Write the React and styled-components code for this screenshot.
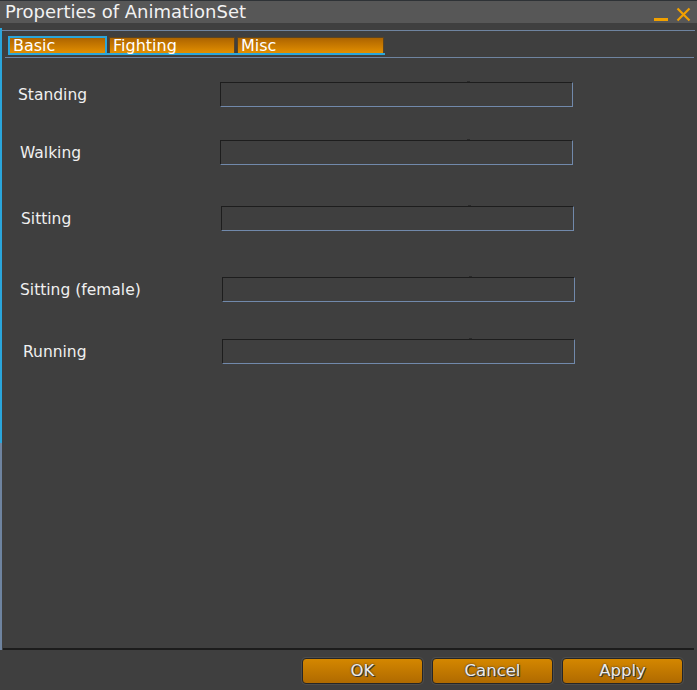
import React from "react";
import styled, { createGlobalStyle } from "styled-components";

const Global = createGlobalStyle`
  html, body { margin: 0; padding: 0; background: #3f3f3f; }
  body { font-family: "DejaVu Sans", "Liberation Sans", sans-serif; }
`;

const Window = styled.div`
  width: 697px;
  height: 690px;
  display: flex;
  flex-direction: column;
  background: #3f3f3f;
  overflow: hidden;
`;

const TitleBar = styled.div`
  height: 23px;
  flex: none;
  display: flex;
  align-items: center;
  justify-content: space-between;
  padding: 0 6px 0 5px;
  box-sizing: border-box;
  background: #575757;
  border-top: 1px solid #2e3236;
`;

const Title = styled.span`
  color: #f2f2f2;
  font-size: 18px;
  line-height: 22px;
  white-space: nowrap;
`;

const TitleIcons = styled.div`
  display: flex;
  align-items: flex-end;
  gap: 8px;
  padding-top: 4px;
`;

const Content = styled.div`
  flex: 1;
  display: flex;
  flex-direction: column;
  border-left: 2px solid transparent;
  border-image: linear-gradient(
      to bottom,
      #3f3f3f 0px,
      #3f3f3f 6px,
      #2aa6dc 6px,
      #2aa6dc 420px,
      #6f84a0 420px
    )
    1;
  border-right: 0;
  border-top: 0;
  border-bottom: 0;
`;

const Rule = styled.div`
  height: 1px;
  flex: none;
  background: ${(p) => p.$color || "#6f84a0"};
  margin: ${(p) => p.$margin || "0"};
`;

const TabStrip = styled.div`
  display: flex;
  align-items: flex-end;
  margin: 5px 0 0 6px;
  width: 377px;
  height: 17px;
  border-bottom: 2px solid #2aa6dc;
  gap: 2px;
`;

const Tab = styled.div`
  box-sizing: border-box;
  width: ${(p) => p.$w}px;
  height: ${(p) => (p.$active ? 17 : 16)}px;
  display: flex;
  align-items: center;
  padding-left: 3px;
  color: #ffffff;
  font-size: 16px;
  line-height: 16px;
  background: linear-gradient(to bottom, #ad6400, #e38f00);
  border: ${(p) => (p.$active ? "2px solid #2aa6dc" : "1px solid #5a4424")};
  border-bottom: none;
`;

const Form = styled.div`
  display: flex;
  flex-direction: column;
  flex: 1;
`;

const Row = styled.div`
  display: grid;
  grid-template-columns: ${(p) => p.$boxX - 2}px 353px;
  align-items: center;
  margin-top: ${(p) => p.$top}px;
`;

const Label = styled.span`
  color: #f0f0f0;
  font-size: 15.5px;
  padding-left: ${(p) => p.$x - 2}px;
  white-space: nowrap;
`;

const Field = styled.div`
  position: relative;
  height: 25px;
  box-sizing: border-box;
  border-top: 1px solid #1d1d1d;
  border-left: 1px solid #1d1d1d;
  border-right: 1px solid #7189ab;
  border-bottom: 1px solid #7189ab;
  background: #3f3f3f;

  &::before {
    content: "";
    position: absolute;
    top: -2px;
    left: 246px;
    width: 3px;
    height: 1px;
    background: #2a2a2a;
  }
`;

const ButtonRow = styled.div`
  height: 40px;
  flex: none;
  display: flex;
  justify-content: flex-end;
  gap: 7px;
  padding: 7px 13px 0 0;
  box-sizing: border-box;
`;

const ButtonFrame = styled.div`
  width: 123px;
  height: 28px;
  box-sizing: border-box;
  padding: 1px;
  border-radius: 5px;
  background: #4d4d4d;
`;

const Button = styled.button`
  width: 100%;
  height: 100%;
  box-sizing: border-box;
  border: 1px solid #262626;
  border-radius: 4px;
  background: linear-gradient(to bottom, #d48700, #b06a00);
  color: #ececec;
  font-family: "DejaVu Sans", "Liberation Sans", sans-serif;
  font-size: 16.5px;
  line-height: 22px;
  padding: 0;
  text-shadow: 0 0 2px #2a2a2a, 1px 1px 0 #3a3a3a;
  cursor: pointer;
`;

const rows = [
  { label: "Standing", x: 18, boxX: 220, top: 24 },
  { label: "Walking", x: 20, boxX: 220, top: 33 },
  { label: "Sitting", x: 21, boxX: 221, top: 41 },
  { label: "Sitting (female)", x: 20, boxX: 222, top: 46 },
  { label: "Running", x: 23, boxX: 222, top: 37 },
];

export default function App() {
  return (
    <>
      <Global />
      <Window>
        <TitleBar>
          <Title>Properties of AnimationSet</Title>
          <TitleIcons>
            <svg width="14" height="4" viewBox="0 0 14 4">
              <rect x="0" y="0" width="14" height="3" fill="#f0a000" />
            </svg>
            <svg width="15" height="15" viewBox="0 0 15 15">
              <path d="M1.5 1.5 L13.5 13.5 M13.5 1.5 L1.5 13.5" stroke="#f0a000" strokeWidth="2.2" fill="none" />
            </svg>
          </TitleIcons>
        </TitleBar>
        <Content>
          <Rule $margin="7px 2px 0 0" />
          <TabStrip>
            <Tab $active $w={99}>Basic</Tab>
            <Tab $w={126}>Fighting</Tab>
            <Tab $w={147}>Misc</Tab>
          </TabStrip>
          <Rule $margin="2px 3px 0 3px" />
          <Form>
            {rows.map((r) => (
              <Row key={r.label} $boxX={r.boxX} $top={r.top}>
                <Label $x={r.x}>{r.label}</Label>
                <Field />
              </Row>
            ))}
          </Form>
          <Rule $color="#1c1c1c" $margin="0 3px 0 1px" />
          <Rule $color="#1c1c1c" $margin="0 3px 0 1px" />
        </Content>
        <ButtonRow>
          <ButtonFrame><Button>OK</Button></ButtonFrame>
          <ButtonFrame><Button>Cancel</Button></ButtonFrame>
          <ButtonFrame><Button>Apply</Button></ButtonFrame>
        </ButtonRow>
      </Window>
    </>
  );
}
